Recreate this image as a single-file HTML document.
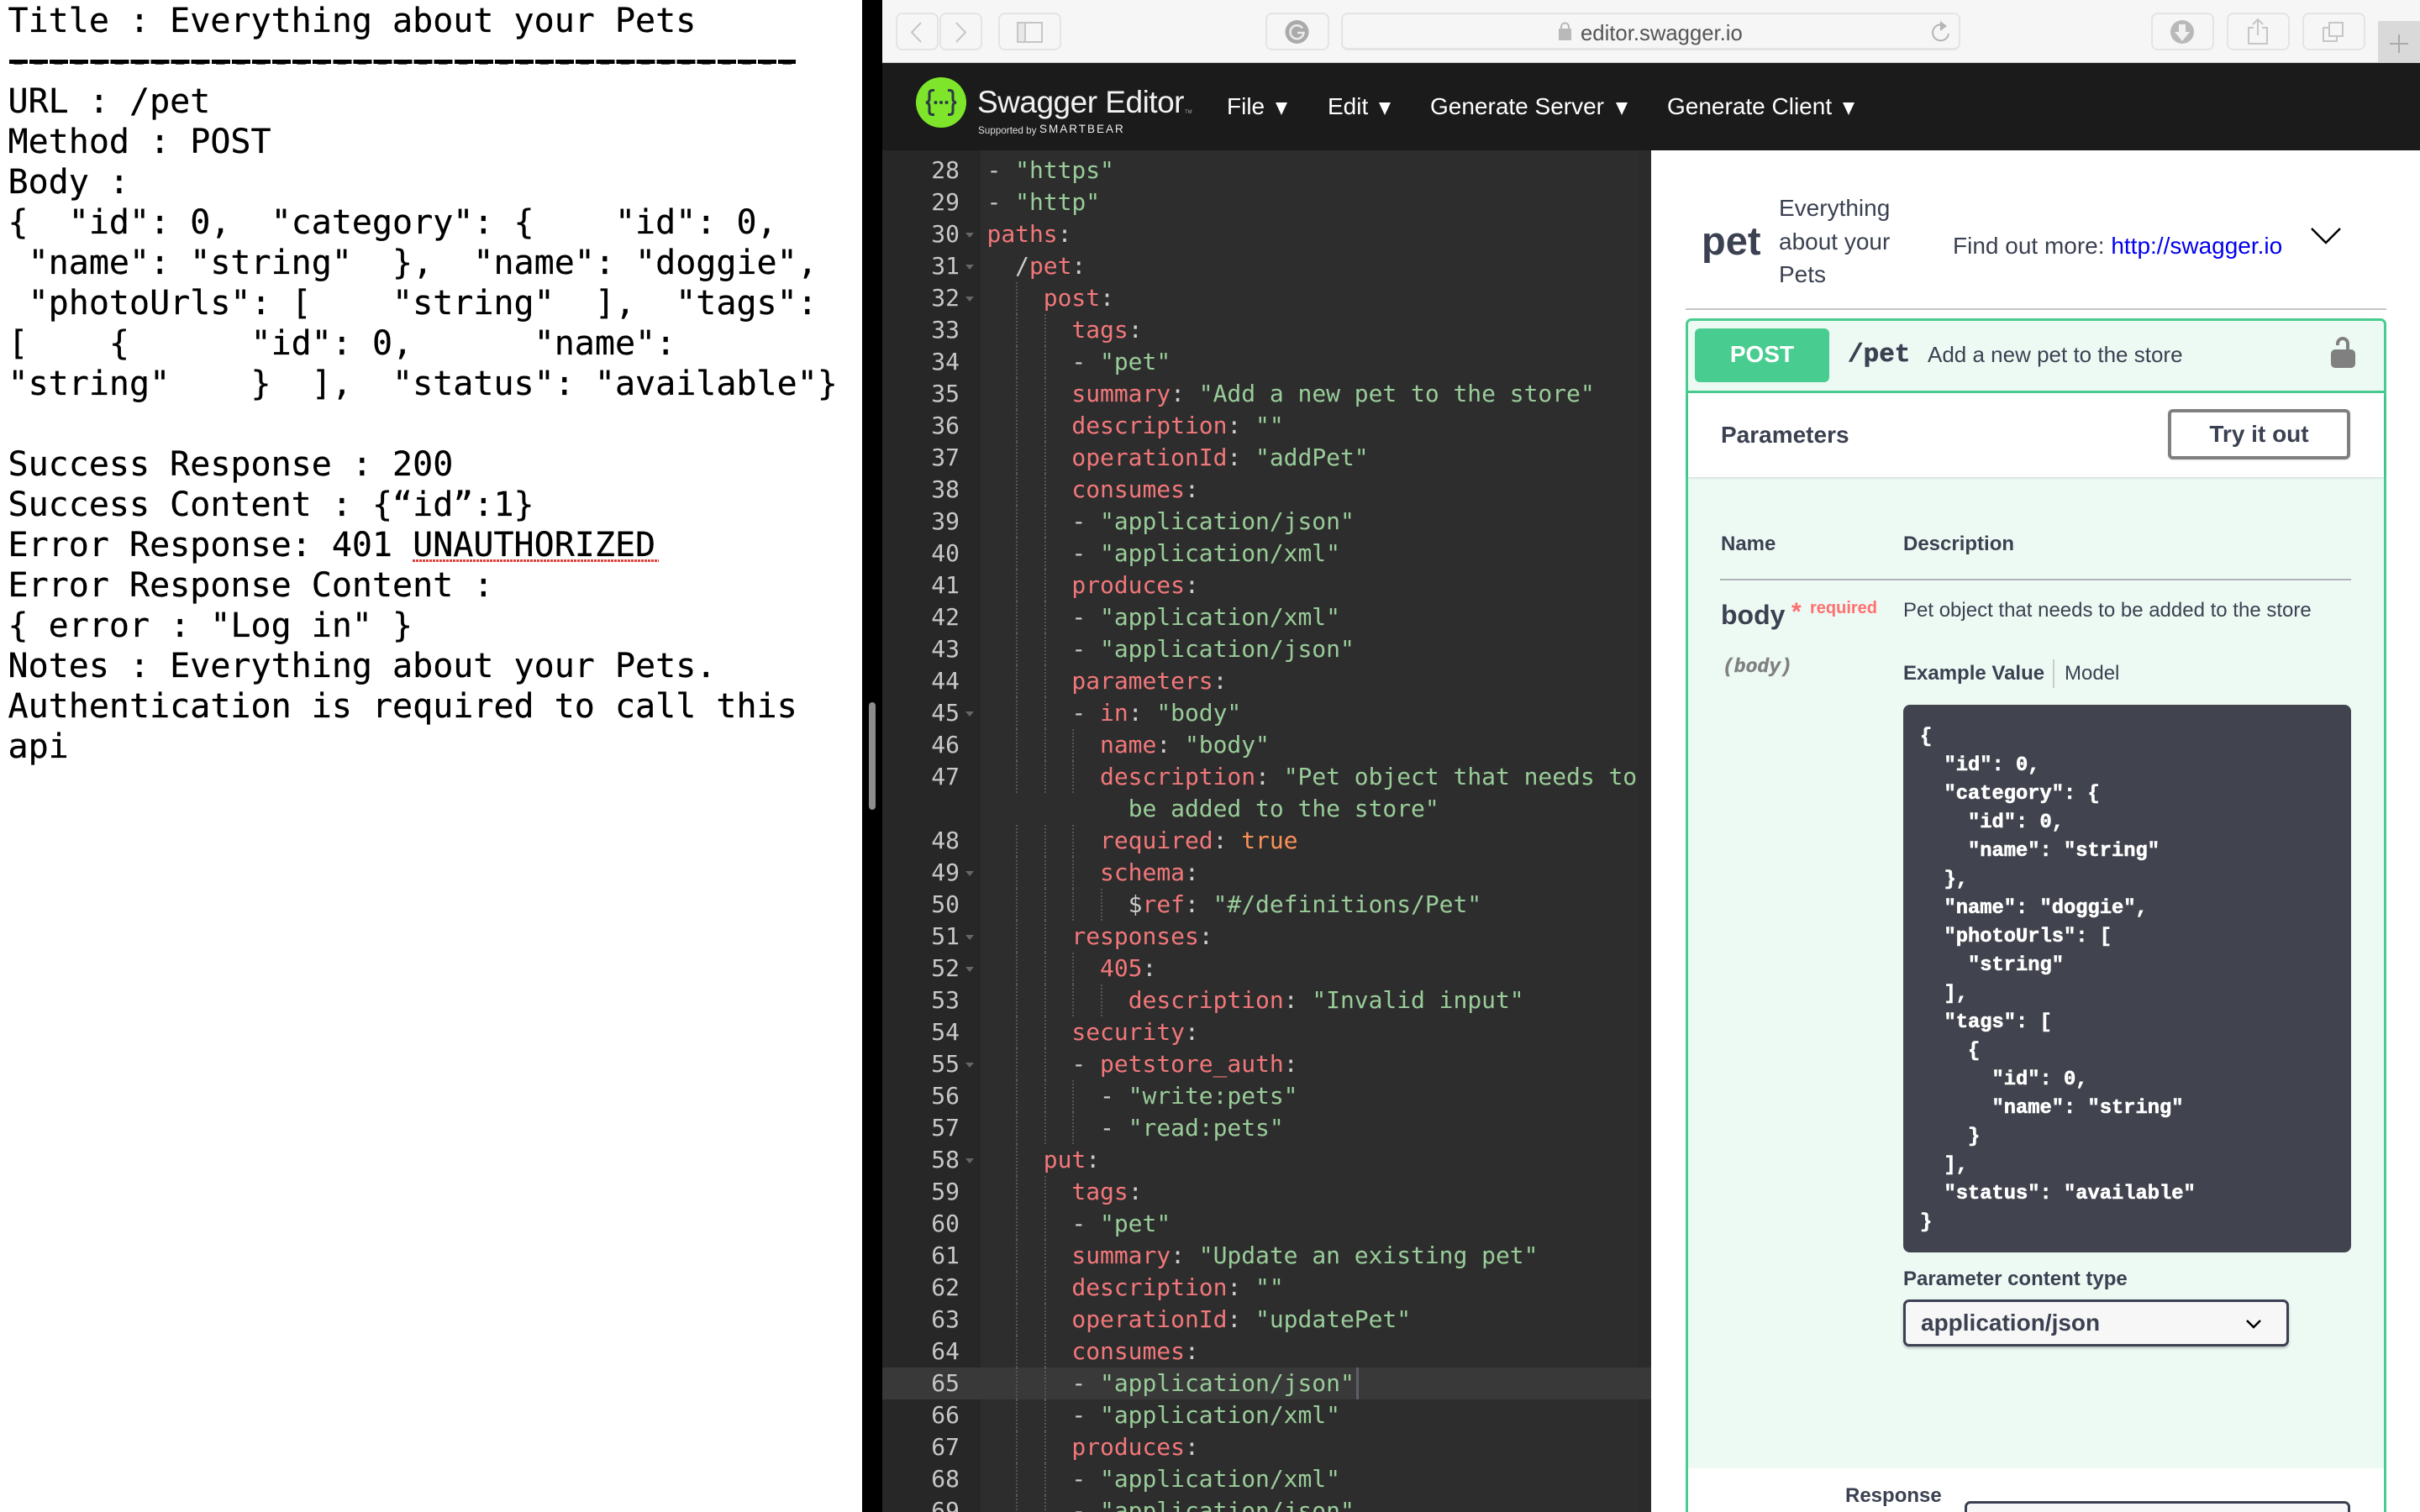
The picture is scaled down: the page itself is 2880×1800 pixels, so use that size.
<!DOCTYPE html>
<html><head><meta charset="utf-8"><style>
html,body{margin:0;padding:0;width:2880px;height:1800px;overflow:hidden;background:#fff}
body{position:relative}
.t{position:absolute;white-space:pre;font-family:"Liberation Sans",sans-serif;color:#3b4151}
.a{position:absolute}
.b{font-weight:bold}
#left{position:absolute;left:0;top:0;width:1026px;height:1800px;background:#fff;font:40px/48px "DejaVu Sans Mono",monospace;color:#000;white-space:pre;padding:1px 0 0 9.500px;box-sizing:border-box;-webkit-text-stroke:.25px #000}
.btn{position:absolute;top:15px;height:45px;border:2px solid #e4e4e4;border-radius:8px;box-sizing:border-box;background:#f6f6f6}
#code{position:absolute;left:1165.500px;top:184px;width:798px;font:28px/38px "DejaVu Sans Mono",monospace;color:#ccc;letter-spacing:-.04px}
#code div{height:38px;padding-left:9px;white-space:pre;background-repeat:repeat-y;background-size:2px 4px}
.g1{background-image:linear-gradient(#555 50%,transparent 50%);background-position:43.500px 0}
.g2{background-image:linear-gradient(#555 50%,transparent 50%),linear-gradient(#555 50%,transparent 50%);background-position:43.500px 0,77px 0}
.g3{background-image:linear-gradient(#555 50%,transparent 50%),linear-gradient(#555 50%,transparent 50%),linear-gradient(#555 50%,transparent 50%);background-position:43.500px 0,77px 0,110.500px 0}
.g4{background-image:linear-gradient(#555 50%,transparent 50%),linear-gradient(#555 50%,transparent 50%),linear-gradient(#555 50%,transparent 50%),linear-gradient(#555 50%,transparent 50%);background-position:43.500px 0,77px 0,110.500px 0,144.500px 0}
#code b{font-weight:normal;color:#f2777a}
#code s{text-decoration:none;color:#99cc99}
#code em{font-style:normal;color:#f99157}
#gut{position:absolute;left:1050px;top:184px;width:92px;font:28px/38px "DejaVu Sans Mono",monospace;color:#c5c8c6;text-align:right;white-space:pre}
.fold{position:absolute;left:1149px;width:0;height:0;border-left:5px solid transparent;border-right:5px solid transparent;border-top:6px solid #666}
</style></head><body>
<div id="left">Title : Everything about your Pets
---------------------------------------
URL : /pet
Method : POST
Body :
{  "id": 0,  "category": {    "id": 0,
 "name": "string"  },  "name": "doggie",
 "photoUrls": [    "string"  ],  "tags":
[    {      "id": 0,      "name":
"string"    }  ],  "status": "available"}

Success Response : 200
Success Content : {“id”:1}
Error Response: 401 UNAUTHORIZED
Error Response Content :
{ error : "Log in" }
Notes : Everything about your Pets.
Authentication is required to call this
api</div>
<div class="a" style="left:11px;top:71px;width:936px;height:5px;background:repeating-linear-gradient(90deg,#000 0 22px,#fff 22px 24.080px)"></div>
<div class="a" style="left:491px;top:666px;width:293px;height:3px;background:repeating-linear-gradient(90deg,#e0403a 0 3px,transparent 3px 4px)"></div>
<div class="a" style="left:1026px;top:0;width:24px;height:1800px;background:#000"></div>
<div class="a" style="left:1034px;top:836px;width:8px;height:128px;border-radius:4px;background:#8c8c8c"></div>

<!-- browser chrome -->
<div class="a" style="left:1050px;top:0;width:1830px;height:75px;background:#f6f6f6;border-bottom:1px solid #d0d0d0;box-sizing:border-box"></div>
<div class="btn" style="left:1066px;width:51px"></div>
<div class="btn" style="left:1118px;width:51px"></div>
<div class="btn" style="left:1188px;width:75px"></div>
<div class="btn" style="left:1506px;width:76px"></div>
<div class="btn" style="left:1596px;width:737px;border-bottom-width:3px"></div>
<div class="btn" style="left:2560px;width:75px"></div>
<div class="btn" style="left:2650px;width:75px"></div>
<div class="btn" style="left:2740px;width:75px"></div>
<div class="a" style="left:2830px;top:25px;width:50px;height:49px;background:#d9d9d9"></div>
<svg class="a" style="left:1050px;top:0" width="1830" height="75" viewBox="1050 0 1830 75" fill="none">
<path d="M1096 27 1085 38.500 1096 50" stroke="#c6c6c6" stroke-width="2"/>
<path d="M1138 27 1149 38.500 1138 50" stroke="#c6c6c6" stroke-width="2"/>
<rect x="1211" y="27" width="29" height="23" stroke="#c6c6c6" stroke-width="2"/><rect x="1211" y="27" width="9" height="23" fill="#e8e8e8" stroke="#c6c6c6" stroke-width="2"/>
<circle cx="1543.500" cy="38" r="14" fill="#aaa"/><path d="M1550 33.500A8 8 0 1 0 1551.500 39H1544" stroke="#ececec" stroke-width="2.500"/>
<path d="M1855 34h15v14h-15z" fill="#b9b9b9"/><path d="M1858 34v-2a4.500 4.500 0 0 1 9 0v2" stroke="#b9b9b9" stroke-width="2"/>
<path d="M2315 31A9.500 9.500 0 1 0 2319 40" stroke="#b5b5b5" stroke-width="2"/><path d="M2309 25l8 6-8 6z" fill="#b5b5b5"/>
<circle cx="2597" cy="38" r="14" fill="#b9b9b9"/><path d="M2593 29h8v9h5l-9 11-9-11h5z" fill="#f1f1f1"/>
<path d="M2682 33h-6v19h22V33h-6" stroke="#c6c6c6" stroke-width="2"/><path d="M2687 42V23M2681 29l6-6 6 6" stroke="#c6c6c6" stroke-width="2"/>
<path d="M2772 33h-7v16h16v-7" stroke="#c6c6c6" stroke-width="2"/><rect x="2772" y="27" width="16" height="16" stroke="#c6c6c6" stroke-width="2"/>
<path d="M2855 41v22M2844 52h22" stroke="#aaa" stroke-width="2"/>
</svg>
<div class="t" style="left:1881px;top:24px;font-size:25.700px;line-height:32px;color:#555">editor.swagger.io</div>

<!-- swagger topbar -->
<div class="a" style="left:1050px;top:75px;width:1830px;height:104px;background:#1b1b1b"></div>
<svg class="a" style="left:1090px;top:92px" width="60" height="60" fill="none"><circle cx="30" cy="30" r="30" fill="#7ee52a"/>
<path d="M22 15.500h-2q-4 0-4 4v6q0 4-4 4.500q4 .5 4 4.500v6q0 4 4 4h2M38 15.500h2q4 0 4 4v6q0 4 4 4.500q-4 .5-4 4.500v6q0 4-4 4h-2" stroke="#2b3b45" stroke-width="3"/>
<circle cx="23.500" cy="30" r="2" fill="#2b3b45"/><circle cx="30" cy="30" r="2" fill="#2b3b45"/><circle cx="36.500" cy="30" r="2" fill="#2b3b45"/></svg>
<div class="t" style="left:1163px;top:99px;font-size:37px;line-height:46px;color:#f2f2f2;letter-spacing:-.500px">Swagger Editor</div>
<div class="t" style="left:1410px;top:130px;font-size:6px;line-height:8px;color:#aaa">TM</div>
<div class="t" style="left:1164px;top:148px;font-size:11.700px;line-height:16px;color:#ddd">Supported by</div>
<div class="t" style="left:1237px;top:146px;font-size:13.500px;line-height:16px;color:#eee;letter-spacing:2px">SMARTBEAR</div>
<div class="t" style="left:1460px;top:110px;font-size:28px;line-height:34px;color:#fff">File</div>
<div class="t" style="left:1580px;top:110px;font-size:28px;line-height:34px;color:#fff">Edit</div>
<div class="t" style="left:1702px;top:110px;font-size:28px;line-height:34px;color:#fff">Generate Server</div>
<div class="t" style="left:1984px;top:110px;font-size:28px;line-height:34px;color:#fff">Generate Client</div>
<svg class="a" style="left:1500px;top:120px" width="720" height="20" fill="#fff"><path d="M18 2h14l-7 15zM141 2h14l-7 15zM423 2h14l-7 15zM693 2h14l-7 15z"/></svg>

<!-- editor -->
<div class="a" style="left:1050px;top:179px;width:915px;height:1621px;background:#2d2d2d"></div>
<div class="a" style="left:1050px;top:179px;width:117px;height:1621px;background:#272727"></div>
<div class="a" style="left:1950px;top:179px;width:15px;height:1621px;background:#2b2b2b"></div>
<div class="a" style="left:1050px;top:1628px;width:915px;height:38px;background:#393939"></div>
<div class="a" style="left:1614px;top:1628px;width:3px;height:38px;background:#5c5f66"></div>
<div id="gut">28
29
30
31
32
33
34
35
36
37
38
39
40
41
42
43
44
45
46
47

48
49
50
51
52
53
54
55
56
57
58
59
60
61
62
63
64
65
66
67
68
69</div>
<div class="fold" style="top:277px"></div><div class="fold" style="top:315px"></div><div class="fold" style="top:353px"></div>
<div class="fold" style="top:847px"></div><div class="fold" style="top:1037px"></div><div class="fold" style="top:1113px"></div><div class="fold" style="top:1151px"></div><div class="fold" style="top:1265px"></div><div class="fold" style="top:1379px"></div>
<div id="code">
<div>- <s>"https"</s></div>
<div>- <s>"http"</s></div>
<div><b>paths</b>:</div>
<div>  /<b>pet</b>:</div>
<div class="g1">    <b>post</b>:</div>
<div class="g2">      <b>tags</b>:</div>
<div class="g2">      - <s>"pet"</s></div>
<div class="g2">      <b>summary</b>: <s>"Add a new pet to the store"</s></div>
<div class="g2">      <b>description</b>: <s>""</s></div>
<div class="g2">      <b>operationId</b>: <s>"addPet"</s></div>
<div class="g2">      <b>consumes</b>:</div>
<div class="g2">      - <s>"application/json"</s></div>
<div class="g2">      - <s>"application/xml"</s></div>
<div class="g2">      <b>produces</b>:</div>
<div class="g2">      - <s>"application/xml"</s></div>
<div class="g2">      - <s>"application/json"</s></div>
<div class="g2">      <b>parameters</b>:</div>
<div class="g2">      - <b>in</b>: <s>"body"</s></div>
<div class="g3">        <b>name</b>: <s>"body"</s></div>
<div class="g3">        <b>description</b>: <s>"Pet object that needs to</s></div>
<div>          <s>be added to the store"</s></div>
<div class="g3">        <b>required</b>: <em>true</em></div>
<div class="g3">        <b>schema</b>:</div>
<div class="g4">          $<b>ref</b>: <s>"#/definitions/Pet"</s></div>
<div class="g2">      <b>responses</b>:</div>
<div class="g3">        <b>405</b>:</div>
<div class="g4">          <b>description</b>: <s>"Invalid input"</s></div>
<div class="g2">      <b>security</b>:</div>
<div class="g2">      - <b>petstore_auth</b>:</div>
<div class="g3">        - <s>"write:pets"</s></div>
<div class="g3">        - <s>"read:pets"</s></div>
<div class="g1">    <b>put</b>:</div>
<div class="g2">      <b>tags</b>:</div>
<div class="g2">      - <s>"pet"</s></div>
<div class="g2">      <b>summary</b>: <s>"Update an existing pet"</s></div>
<div class="g2">      <b>description</b>: <s>""</s></div>
<div class="g2">      <b>operationId</b>: <s>"updatePet"</s></div>
<div class="g2">      <b>consumes</b>:</div>
<div class="g2">      - <s>"application/json"</s></div>
<div class="g2">      - <s>"application/xml"</s></div>
<div class="g2">      <b>produces</b>:</div>
<div class="g2">      - <s>"application/xml"</s></div>
<div class="g2">      - <s>"application/json"</s></div>
</div>

<!-- swagger ui panel -->
<div class="a" style="left:1965px;top:179px;width:915px;height:1621px;background:#fff"></div>
<div class="t b" style="left:2025px;top:260px;font-size:47px;line-height:54px">pet</div>
<div class="t" style="left:2117px;top:228px;font-size:28px;line-height:39.500px">Everything
about your
Pets</div>
<div class="t" style="left:2324px;top:276px;font-size:28px;line-height:34px">Find out more: <span style="color:#0000ee">http://swagger.io</span></div>
<svg class="a" style="left:2748px;top:268px" width="40" height="24" fill="none"><path d="M3 4 20 21 37 4" stroke="#000" stroke-width="2.500"/></svg>
<div class="a" style="left:2006px;top:367px;width:834px;height:2px;background:#c4c6ca"></div>

<div class="a" style="left:2006px;top:379px;width:834px;height:1421px;box-sizing:border-box;border:3px solid #49cc90;border-bottom:0;border-radius:7px 7px 0 0;background:#edfaf4;overflow:hidden"></div>
<div class="a" style="left:2008px;top:465px;width:830px;height:3px;background:#49cc90"></div>
<div class="a" style="left:2009px;top:468px;width:828px;height:100px;background:#fff;box-shadow:0 1px 3px rgba(0,0,0,.15)"></div>
<div class="a" style="left:2009px;top:1748px;width:828px;height:52px;background:#fff"></div>
<div class="a" style="left:2017px;top:391px;width:160px;height:64px;border-radius:6px;background:#49cc90"></div>
<div class="t b" style="left:2017px;top:405px;width:160px;text-align:center;font-size:28px;line-height:34px;color:#fff">POST</div>
<div class="t b" style="left:2199px;top:405px;font-family:'Liberation Mono',monospace;font-size:31px;line-height:36px;-webkit-text-stroke:.6px #3b4151">/pet</div>
<div class="t" style="left:2294px;top:406px;font-size:26px;line-height:32px">Add a new pet to the store</div>
<svg class="a" style="left:2772px;top:400px" width="34" height="40"><path d="M10 11V9a6 6 0 0 1 12 0V18" fill="none" stroke="#808080" stroke-width="4"/><rect x="2" y="16" width="29" height="22" rx="5" fill="#808080"/></svg>

<div class="t b" style="left:2048px;top:501px;font-size:28px;line-height:34px">Parameters</div>
<div class="a" style="left:2580px;top:487px;width:217px;height:60px;box-sizing:border-box;border:4px solid #808080;border-radius:6px;background:#fff;box-shadow:0 1px 2px rgba(0,0,0,.1)"></div>
<div class="t b" style="left:2580px;top:500px;width:217px;text-align:center;font-size:28px;line-height:34px">Try it out</div>

<div class="t b" style="left:2048px;top:633px;font-size:24px;line-height:30px">Name</div>
<div class="t b" style="left:2265px;top:633px;font-size:24px;line-height:30px">Description</div>
<div class="a" style="left:2047px;top:689px;width:751px;height:2px;background:#b0b3b8"></div>
<div class="t b" style="left:2048px;top:713px;font-size:32px;line-height:38px">body</div>
<div class="t b" style="left:2132px;top:712px;font-size:30px;line-height:34px;color:#ff6f6f">*</div>
<div class="t b" style="left:2154px;top:712px;font-size:20px;line-height:24px;color:#ff6f6f">required</div>
<div class="t" style="left:2265px;top:712px;font-size:24px;line-height:30px">Pet object that needs to be added to the store</div>
<div class="t b" style="left:2050px;top:781px;font-family:'Liberation Mono',monospace;font-style:italic;font-size:23px;line-height:26px;color:#808080;-webkit-text-stroke:.4px #808080">(body)</div>
<div class="t b" style="left:2265px;top:787px;font-size:24px;line-height:30px">Example Value</div>
<div class="a" style="left:2443px;top:785px;width:2px;height:34px;background:#c9cbcf"></div>
<div class="t" style="left:2457px;top:787px;font-size:24px;line-height:30px">Model</div>

<div class="a" style="left:2265px;top:839px;width:533px;height:652px;border-radius:8px;background:#41444e"></div>
<div class="t b" style="left:2285px;top:861px;font-family:'Liberation Mono',monospace;font-size:23.760px;line-height:34px;color:#fff;-webkit-text-stroke:.6px #fff">{
  "id": 0,
  "category": {
    "id": 0,
    "name": "string"
  },
  "name": "doggie",
  "photoUrls": [
    "string"
  ],
  "tags": [
    {
      "id": 0,
      "name": "string"
    }
  ],
  "status": "available"
}</div>

<div class="t b" style="left:2265px;top:1508px;font-size:24px;line-height:30px">Parameter content type</div>
<div class="a" style="left:2265px;top:1547px;width:459px;height:56px;box-sizing:border-box;border:3px solid #3b4151;border-radius:7px;background:#f7f7f7;box-shadow:0 2px 3px rgba(0,0,0,.25)"></div>
<div class="t b" style="left:2286px;top:1558px;font-size:28px;line-height:34px">application/json</div>
<svg class="a" style="left:2670px;top:1568px" width="24" height="16" fill="none"><path d="M4 4 12 12 20 4" stroke="#000" stroke-width="2.500"/></svg>

<div class="t b" style="left:2196px;top:1766px;font-size:24px;line-height:30px">Response</div>
<div class="a" style="left:2338px;top:1787px;width:459px;height:40px;box-sizing:border-box;border:3px solid #3b4151;border-radius:7px;background:#f7f7f7"></div>
</body></html>
